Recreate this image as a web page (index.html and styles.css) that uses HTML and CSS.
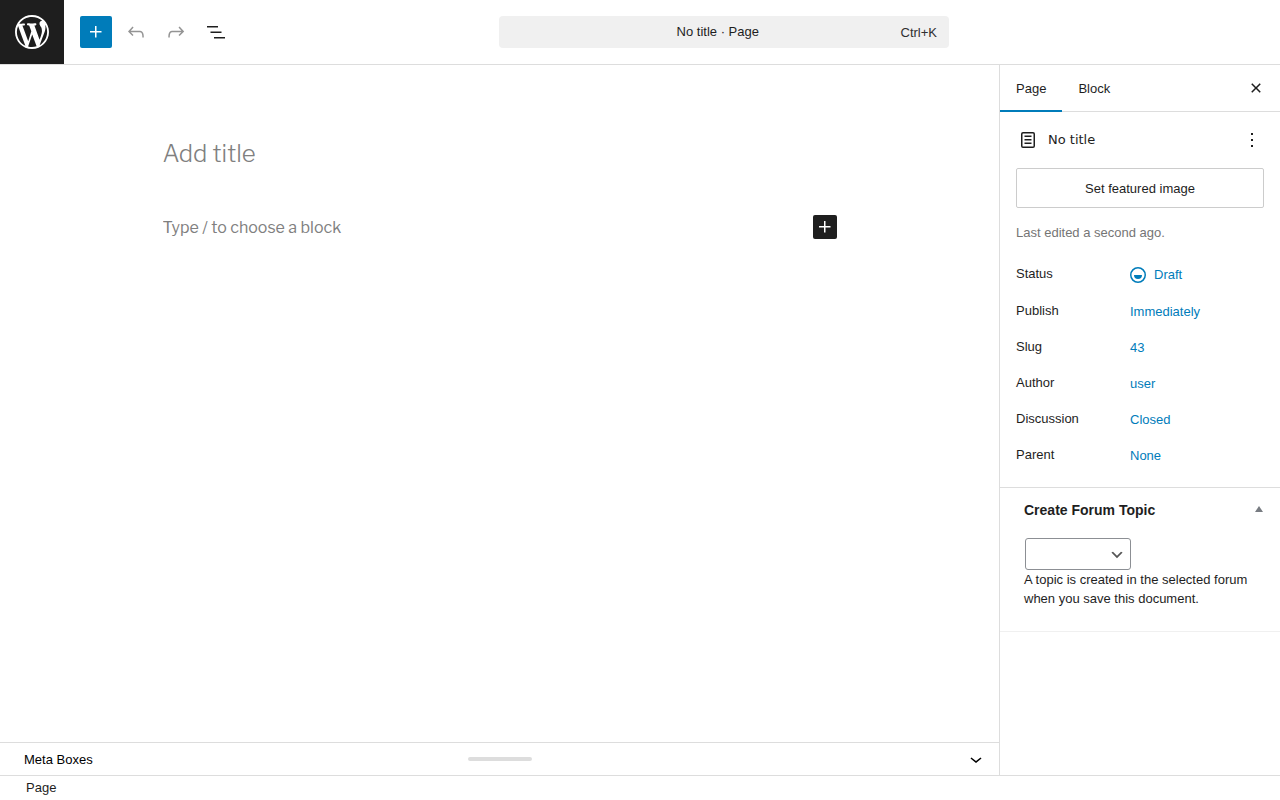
FILE: index.html
```html
<!DOCTYPE html>
<html lang="en">
<head>
    <meta charset="UTF-8">
    <meta name="viewport" content="width=device-width, initial-scale=1.0">
    <title>Add New Page</title>
    <link rel="stylesheet" href="styles.css">
</head>
<body>
<div class="editor">

    <!-- Top bar -->
    <header class="header">
        <a class="site-logo" href="#" aria-label="View Pages">
            <svg width="34" height="34" viewBox="0 0 20 20"><path d="M20 10c0-5.51-4.49-10-10-10C4.48 0 0 4.49 0 10c0 5.52 4.48 10 10 10 5.51 0 10-4.48 10-10zM7.78 15.37L4.37 6.22c.55-.02 1.17-.08 1.17-.08.5-.06.44-1.13-.06-1.11 0 0-1.45.11-2.37.11-.18 0-.37 0-.58-.01C4.12 2.69 6.87 1.11 10 1.11c2.33 0 4.45.87 6.05 2.34-.68-.11-1.65.39-1.65 1.58 0 .74.45 1.36.9 2.1.35.61.55 1.36.55 2.46 0 1.49-1.4 5-1.4 5l-3.03-8.37c.54-.02.82-.17.82-.17.5-.05.44-1.25-.06-1.22 0 0-1.44.12-2.38.12-.87 0-2.33-.12-2.33-.12-.5-.03-.56 1.2-.06 1.22l.92.08 1.26 3.41zM17.41 10c.24-.64.74-1.87.43-4.25.7 1.29 1.05 2.71 1.05 4.25 0 3.29-1.73 6.24-4.4 7.78.97-2.59 1.94-5.2 2.92-7.78zM6.1 18.09C3.12 16.65 1.11 13.53 1.11 10c0-1.3.23-2.48.72-3.59C3.25 10.3 4.67 14.2 6.1 18.09zm4.03-6.63l2.58 6.98c-.86.29-1.76.45-2.71.45-.79 0-1.57-.11-2.29-.33.81-2.38 1.62-4.74 2.42-7.1z"/></svg>
        </a>
        <div class="toolbar">
            <button class="icon-button primary" aria-label="Toggle block inserter">
                <svg width="24" height="24" viewBox="0 0 24 24"><path d="M11 12.5V17.5H12.5V12.5H17.5V11H12.5V6H11V11H6V12.5H11Z"/></svg>
            </button>
            <button class="icon-button" aria-label="Undo" disabled>
                <svg width="24" height="24" viewBox="0 0 24 24"><path d="M18.3 11.7c-.6-.6-1.4-.9-2.3-.9H6.7l2.9-3.3-1.1-1-4.5 5L8.5 16l1-1-2.7-2.7H16c.5 0 .9.2 1.3.5 1 1 1 3.4 1 4.5v.3h1.5v-.2c0-1.5 0-4.3-1.5-5.7z"/></svg>
            </button>
            <button class="icon-button" aria-label="Redo" disabled>
                <svg width="24" height="24" viewBox="0 0 24 24"><path d="M15.6 6.5l-1.1 1 2.9 3.3H8c-.9 0-1.7.3-2.3.9-1.4 1.5-1.4 4.2-1.4 5.6v.2h1.5v-.3c0-1.1 0-3.5 1-4.5.3-.3.7-.5 1.3-.5h9.2L14.5 15l1.1 1.1 4.6-4.6-4.6-5z"/></svg>
            </button>
            <button class="icon-button" aria-label="Document Overview">
                <svg width="24" height="24" viewBox="0 0 24 24"><path d="M3 6h11v1.5H3V6Zm3.5 5.5h11V13h-11v-1.5ZM21 17H10v1.5h11V17Z"/></svg>
            </button>
        </div>
        <div class="header-center">
            <button class="document-bar">
                <span class="document-title">No title · Page</span>
                <span class="shortcut">Ctrl+K</span>
            </button>
        </div>
    </header>

    <div class="body">
        <main class="content">
            <div class="canvas">
                <div class="post">
                    <input class="post-title" type="text" placeholder="Add title" aria-label="Add title">
                    <div class="block-row">
                        <input class="paragraph" type="text" placeholder="Type / to choose a block" aria-label="Empty block">
                        <button class="inserter" aria-label="Add block">
                            <svg width="24" height="24" viewBox="0 0 24 24"><path d="M11 12.5V17.5H12.5V12.5H17.5V11H12.5V6H11V11H6V12.5H11Z"/></svg>
                        </button>
                    </div>
                </div>
            </div>
            <button class="meta-boxes">
                <span class="meta-label">Meta Boxes</span>
                <span class="drag-handle"></span>
                <svg width="24" height="24" viewBox="0 0 24 24"><path d="M17.5 11.6L12 16l-5.5-4.4.9-1.2L12 14l4.5-3.6 1 1.2z"/></svg>
            </button>
        </main>

        <!-- Settings sidebar -->
        <aside class="sidebar">
            <div class="tabs" role="tablist">
                <button class="tab active" role="tab" aria-selected="true">Page</button>
                <button class="tab" role="tab" aria-selected="false">Block</button>
                <button class="icon-button close" aria-label="Close Settings">
                    <svg width="24" height="24" viewBox="0 0 24 24"><path d="M12 13.06l3.712 3.713 1.061-1.06L13.061 12l3.712-3.712-1.06-1.06L12 10.938 8.288 7.227l-1.061 1.06L10.939 12l-3.712 3.712 1.06 1.061L12 13.061z"/></svg>
                </button>
            </div>

            <section class="panel">
                <div class="card">
                    <svg width="24" height="24" viewBox="0 0 24 24"><path d="M15.5 7.5h-7V9h7V7.5Zm-7 3.5h7v1.5h-7V11Zm7 3.5h-7V16h7v-1.5Z"/><path d="M17 4H7a2 2 0 0 0-2 2v12a2 2 0 0 0 2 2h10a2 2 0 0 0 2-2V6a2 2 0 0 0-2-2ZM7 5.5h10a.5.5 0 0 1 .5.5v12a.5.5 0 0 1-.5.5H7a.5.5 0 0 1-.5-.5V6a.5.5 0 0 1 .5-.5Z"/></svg>
                    <h2 class="card-title">No title</h2>
                    <button class="card-actions" aria-label="Actions">
                        <svg width="24" height="24" viewBox="0 0 24 24"><path d="M13 19h-2v-2h2v2zm0-6h-2v-2h2v2zm0-6h-2V5h2v2z"/></svg>
                    </button>
                </div>
                <button class="featured-image">Set featured image</button>
                <p class="last-edited">Last edited a second ago.</p>
                <div class="rows">
                    <div class="row status">
                        <span class="row-label">Status</span>
                        <button class="row-value">
                            <svg width="24" height="24" viewBox="0 0 24 24"><path fill-rule="evenodd" d="M12 18.5a6.5 6.5 0 1 1 0-13 6.5 6.5 0 0 1 0 13ZM4 12a8 8 0 1 1 16 0 8 8 0 0 1-16 0Zm8 4a4 4 0 0 0 4-4H8a4 4 0 0 0 4 4Z"/></svg>
                            Draft
                        </button>
                    </div>
                    <div class="row">
                        <span class="row-label">Publish</span>
                        <button class="row-value">Immediately</button>
                    </div>
                    <div class="row">
                        <span class="row-label">Slug</span>
                        <button class="row-value">43</button>
                    </div>
                    <div class="row">
                        <span class="row-label">Author</span>
                        <button class="row-value">user</button>
                    </div>
                    <div class="row">
                        <span class="row-label">Discussion</span>
                        <button class="row-value">Closed</button>
                    </div>
                    <div class="row">
                        <span class="row-label">Parent</span>
                        <button class="row-value">None</button>
                    </div>
                </div>
            </section>

            <section class="postbox">
                <div class="postbox-header">
                    <h2 id="forum-heading">Create Forum Topic</h2>
                    <button class="toggle" aria-label="Toggle panel: Create Forum Topic">
                        <svg width="8" height="6" viewBox="0 0 8 6"><path d="M4 0l4 6H0z"/></svg>
                    </button>
                </div>
                <div class="select-wrap">
                    <select class="forum-select" aria-labelledby="forum-heading">
                        <option></option>
                    </select>
                    <svg class="select-arrow" width="16" height="16" viewBox="0 0 20 20"><path d="M5 6l5 5 5-5 2 1-7 7-7-7 2-1z"/></svg>
                </div>
                <p>A topic is created in the selected forum when you save this document.</p>
            </section>
        </aside>
    </div>

    <footer class="footer">Page</footer>
</div>
</body>
</html>
```

FILE: styles.css
```css
* {
    box-sizing: border-box;
}

body {
    margin: 0;
    font-family: "Liberation Sans", Arial, sans-serif;
    font-size: 13px;
    color: #1e1e1e;
    background: #fff;
}

button {
    font: inherit;
    color: inherit;
    background: none;
    border: none;
    padding: 0;
    cursor: pointer;
}

h2,
p {
    margin: 0;
}

svg {
    display: block;
    fill: currentColor;
    flex-shrink: 0;
}

.editor {
    display: flex;
    flex-direction: column;
    height: 100vh;
}

/* Header */
.header {
    display: flex;
    align-items: center;
    padding-right: 64px;
    border-bottom: 1px solid #ddd;
}

.site-logo {
    display: flex;
    align-items: center;
    justify-content: center;
    width: 64px;
    height: 64px;
    background: #1e1e1e;
    color: #fff;
}

.toolbar {
    display: flex;
    gap: 8px;
    padding-left: 16px;
}

.icon-button {
    display: flex;
    align-items: center;
    justify-content: center;
    width: 32px;
    height: 32px;
    border-radius: 2px;
}

.icon-button:disabled {
    color: #949494;
}

.icon-button.primary {
    background: #007cba;
    color: #fff;
}

.header-center {
    flex: 1;
    display: flex;
    justify-content: center;
}

.document-bar {
    display: flex;
    align-items: center;
    width: 450px;
    height: 32px;
    padding: 0 12px 0 36px;
    background: #f0f0f0;
    border-radius: 4px;
}

.document-title {
    flex: 1;
    line-height: 16px;
    padding-bottom: 1px;
}

.shortcut {
    color: #2f2f2f;
}

/* Canvas */
.body {
    flex: 1;
    display: flex;
    min-height: 0;
}

.content {
    flex: 1;
    display: flex;
    flex-direction: column;
    min-width: 0;
}

.canvas {
    flex: 1;
    padding: 64px 24px 0;
}

.post {
    max-width: 674px;
    margin: 0 auto;
}

.post-title,
.paragraph {
    width: 100%;
    padding: 0;
    border: none;
    outline: none;
    font-family: "Libre Franklin", "Open Sans", sans-serif;
    color: #333;
}

.post-title {
    display: block;
    height: 48px;
    font-size: 24px;
    font-weight: 300;
}

.paragraph {
    flex: 1;
    height: 24px;
    font-size: 16px;
}

.post-title::placeholder,
.paragraph::placeholder {
    color: #808080;
}

.block-row {
    display: flex;
    align-items: center;
    margin-top: 38px;
}

.inserter {
    background: #1e1e1e;
    color: #fff;
    border-radius: 2px;
}

.meta-boxes {
    display: grid;
    grid-template-columns: 1fr 64px 1fr;
    align-items: center;
    height: 33px;
    padding: 0 11px;
    border-top: 1px solid #ddd;
    color: #000;
    text-align: left;
}

.meta-label {
    padding-left: 13px;
}

.meta-boxes svg {
    justify-self: end;
}

.drag-handle {
    height: 4px;
    background: #ddd;
    border-radius: 4px;
}

/* Sidebar */
.sidebar {
    width: 281px;
    border-left: 1px solid #ddd;
}

.tabs {
    display: flex;
    align-items: center;
    height: 47px;
    padding-right: 8px;
    border-bottom: 1px solid #ddd;
}

.tab {
    height: 47px;
    padding: 0 16px;
    border-bottom: 2px solid transparent;
    border-top: 2px solid transparent;
}

.tab.active {
    border-bottom-color: #007cba;
}

.close {
    margin-left: auto;
}

.panel {
    padding: 16px;
    border-bottom: 1px solid #ddd;
}

.card {
    display: flex;
    align-items: center;
    gap: 8px;
    height: 24px;
}

.card-title {
    flex: 1;
    padding-bottom: 2px;
    font-family: "DejaVu Sans", sans-serif;
    font-size: 13px;
    font-weight: 400;
}

.featured-image {
    display: block;
    width: 100%;
    height: 40px;
    margin-top: 16px;
    border: 1px solid #ccc;
    border-radius: 2px;
}

.last-edited {
    margin-top: 16px;
    line-height: 18px;
    color: #757575;
}

.rows {
    display: flex;
    flex-direction: column;
    gap: 4px;
    margin-top: 16px;
}

.row {
    display: grid;
    grid-template-columns: 114px 1fr;
    align-items: center;
    height: 32px;
}

.row.status {
    height: 33px;
}

.row-label {
    padding-bottom: 2px;
}

.row-value {
    display: flex;
    align-items: center;
    justify-self: start;
    gap: 4px;
    color: #007cba;
}

.row-value svg {
    margin-left: -4px;
}

.postbox {
    padding: 0 24px 23px;
    border-bottom: 1px solid #f0f0f0;
    line-height: 19px;
}

.postbox-header {
    display: flex;
    align-items: center;
    justify-content: space-between;
    height: 44px;
    margin-right: -8px;
}

.postbox-header h2 {
    font-size: 14px;
}

.toggle {
    padding: 0 1px 2px;
    color: #787c82;
}

.select-wrap {
    position: relative;
    width: 106px;
    margin: 6px 1px 0;
}

.forum-select {
    display: block;
    width: 100%;
    height: 32px;
    padding: 0 24px 0 8px;
    appearance: none;
    background: #fff;
    border: 1px solid #8c8f94;
    border-radius: 3px;
}

.select-arrow {
    position: absolute;
    top: 9px;
    right: 6px;
    color: #555;
    pointer-events: none;
}

/* Footer */
.footer {
    height: 25px;
    padding: 0 26px;
    border-top: 1px solid #ddd;
    line-height: 24px;
}
```
